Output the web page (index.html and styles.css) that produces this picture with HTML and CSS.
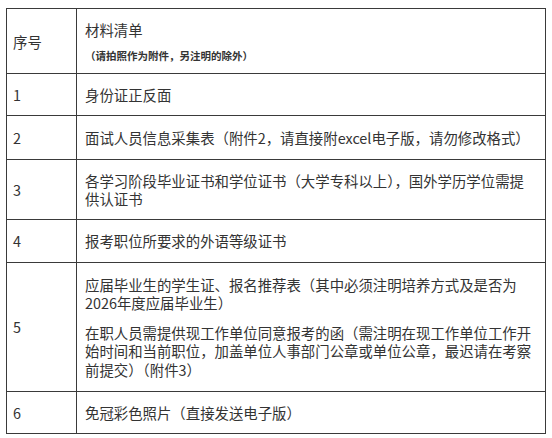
FILE: index.html
```html
<!DOCTYPE html>
<html lang="zh-CN">
<head>
<meta charset="utf-8">
<link rel="stylesheet" href="styles.css">
</head>
<body>
<table class="list">
  <tr class="r-head">
    <td class="c-num">序号</td>
    <td class="c-item">
      <div class="title">材料清单</div>
      <div class="note">（请拍照作为附件，另注明的除外）</div>
    </td>
  </tr>
  <tr class="r-1">
    <td class="c-num">1</td>
    <td class="c-item">身份证正反面</td>
  </tr>
  <tr class="r-2">
    <td class="c-num">2</td>
    <td class="c-item">面试人员信息采集表（附件2，请直接附excel电子版，请勿修改格式）</td>
  </tr>
  <tr class="r-3">
    <td class="c-num">3</td>
    <td class="c-item">各学习阶段毕业证书和学位证书（大学专科以上），国外学历学位需提供认证书</td>
  </tr>
  <tr class="r-4">
    <td class="c-num">4</td>
    <td class="c-item">报考职位所要求的外语等级证书</td>
  </tr>
  <tr class="r-5">
    <td class="c-num">5</td>
    <td class="c-item">
      <p class="para">应届毕业生的学生证、报名推荐表（其中必须注明培养方式及是否为2026年度应届毕业生）</p>
      <p class="para">在职人员需提供现工作单位同意报考的函（需注明在现工作单位工作开始时间和当前职位，加盖单位人事部门公章或单位公章，最迟请在考察前提交）（附件3）</p>
    </td>
  </tr>
  <tr class="r-6">
    <td class="c-num">6</td>
    <td class="c-item">免冠彩色照片（直接发送电子版）</td>
  </tr>
</table>
</body>
</html>
```

FILE: styles.css
```css
html, body {
  margin: 0;
  padding: 0;
  background: #ffffff;
}

body {
  padding: 8px 0 0 6px;
  font-family: "Noto Sans CJK SC", "Noto Sans", sans-serif;
  font-size: 14.4px;
  line-height: 18.5px;
  color: #333333;
}

.list {
  border-collapse: collapse;
  width: 540px;
  table-layout: fixed;
}

.list td {
  border: 1px solid #3a3a3a;
  vertical-align: middle;
  padding: 12px 8px 10px 8px;
}

.c-num {
  width: 70px;
  padding-left: 6px !important;
  box-sizing: border-box;
}

.c-item {
  padding-left: 8px;
}

.title {
  line-height: 18.5px;
}

.note {
  margin-top: 9px;
  font-size: 10.5px;
  line-height: 14px;
  font-weight: bold;
  color: #333333;
}

.para {
  margin: 0;
}

.para + .para {
  margin-top: 11px;
}

.r-head { height: 63px; }
.r-1 { height: 42px; }
.r-2 { height: 44px; }
.r-3 { height: 60px; }
.r-4 { height: 43px; }
.r-5 { height: 129px; }
.r-6 { height: 42px; }
```
